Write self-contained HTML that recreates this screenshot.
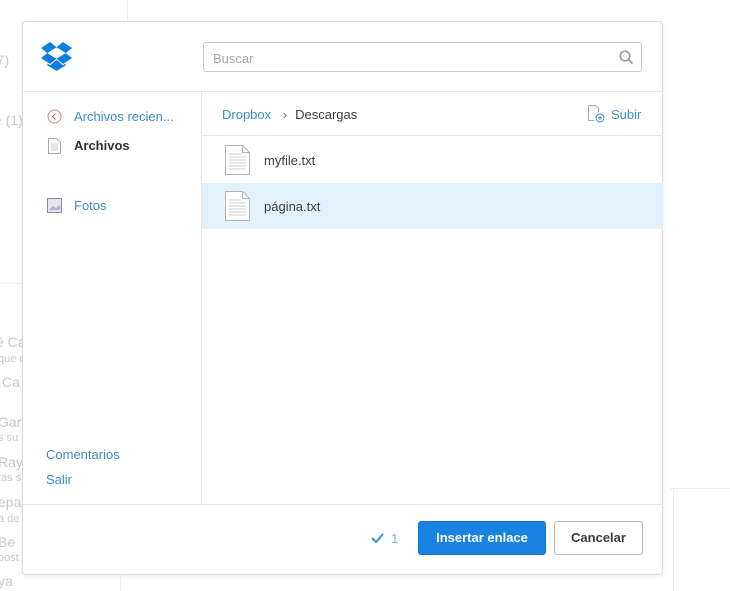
<!DOCTYPE html>
<html><head><meta charset="utf-8"><style>
*{box-sizing:border-box;margin:0;padding:0}
body{width:730px;height:591px;background:#fff;font-family:"Liberation Sans",sans-serif;position:relative;overflow:hidden;font-size:13px}
.bg{position:absolute;color:#c8c8c8;font-size:14px}
.modal{position:absolute;left:22px;top:21px;width:641px;height:554px;background:#fff;border:1px solid #dcdcdc;border-radius:4px;box-shadow:0 1px 4px rgba(0,0,0,.08)}
.hdr{position:absolute;left:0;top:0;width:100%;height:70px;border-bottom:1px solid #e6e6e6}
.search{position:absolute;left:180px;top:20px;width:439px;height:30px;border:1px solid #ccc;border-radius:3px;color:#a6a6a6;padding:8px 9px;font-size:13px}
.side{position:absolute;left:0;top:70px;width:179px;height:412px;border-right:1px solid #e6e6e6}
.si{position:absolute;left:51px;font-size:13px;color:#3d8fc6}
.main{position:absolute;left:179px;top:70px;width:461px;height:412px}
.crumb{height:44px;border-bottom:1px solid #e6e6e6;padding:15px 20px;color:#3d8fc6;font-size:13px;position:relative}
.row{height:46px;position:relative;color:#3c3c3c;font-size:13px}
.row.sel{background:#e3f1fc}
.row span{position:absolute;left:62px;top:16px}
.row svg{position:absolute;left:23px;top:8px}
.ftr{position:absolute;left:0;top:482px;width:100%;height:71px;border-top:1px solid #e6e6e6}
.btn1{position:absolute;left:395px;top:16px;width:128px;height:34px;background:#1a82e0;border:1px solid #1575cc;border-radius:3px;color:#fff;font-weight:bold;text-align:center;line-height:32px;font-size:13px}
.btn2{position:absolute;left:531px;top:16px;width:89px;height:34px;background:#fff;border:1px solid #bbb;border-radius:3px;color:#3c3c3c;font-weight:bold;text-align:center;line-height:32px;font-size:13px}
</style></head><body>
<div class="bg" style="left:-8px;top:52px">(7)</div>
<div class="bg" style="left:-6px;top:112px">e (1)</div>
<div class="bg" style="left:-4px;top:334px">ê Ca</div>
<div class="bg" style="left:-2px;top:353px;font-size:11px">que d</div>
<div class="bg" style="left:2px;top:374px">Ca</div>
<div class="bg" style="left:-2px;top:414px">Gar</div>
<div class="bg" style="left:-2px;top:432px;font-size:11px">s su</div>
<div class="bg" style="left:-2px;top:454px">Ray</div>
<div class="bg" style="left:-2px;top:472px;font-size:11px">tas s</div>
<div class="bg" style="left:-2px;top:494px">epal</div>
<div class="bg" style="left:-2px;top:513px;font-size:11px">a de</div>
<div class="bg" style="left:-2px;top:534px">Be</div>
<div class="bg" style="left:-2px;top:552px;font-size:11px">post</div>
<div class="bg" style="left:-2px;top:573px">ya</div>
<div style="position:absolute;left:120px;top:575px;width:1px;height:16px;background:#eee"></div>
<div style="position:absolute;left:127px;top:0;width:1px;height:21px;background:#eee"></div>
<div style="position:absolute;left:0;top:283px;width:22px;height:1px;background:#eee"></div>
<div style="position:absolute;left:670px;top:488px;width:60px;height:1px;background:#eee"></div>
<div style="position:absolute;left:673px;top:488px;width:1px;height:103px;background:#eee"></div>
<div class="modal">
 <div class="hdr">
  <svg style="position:absolute;left:18px;top:20px" width="31" height="29" viewBox="0 0 42.4 39.6"><path fill="#0d7fe0" d="M12.5 0L0 8.1l8.7 7L21.2 7.2zM0 22l12.5 8.1 8.7-7.3-12.5-7.7zm21.2.8l8.8 7.3 12.4-8.1-8.6-6.9zm21.2-14.7L29.9 0l-8.7 7.2 12.5 7.8zM21.3 24.4l-8.8 7.3-3.7-2.5v2.8l12.5 7.5 12.5-7.5v-2.8l-3.8 2.5z"/></svg>
  <div class="search">Buscar
   <svg style="position:absolute;right:7px;top:7px" width="15" height="15" viewBox="0 0 15 15"><circle cx="6" cy="6" r="4.8" fill="none" stroke="#999" stroke-width="1.6"/><path d="M9.5 9.5l4 4" stroke="#999" stroke-width="1.8"/></svg></div>
 </div>
 <div class="side">
  <svg style="position:absolute;left:24px;top:17px" width="15" height="15"><circle cx="7.5" cy="7.5" r="6.5" fill="none" stroke="#c98c8c" stroke-width="1"/><path d="M8.5 4.5L5.5 7.5l3 3" fill="none" stroke="#c05a5a" stroke-width="1"/></svg>
  <div class="si" style="top:17px">Archivos recien...</div>
  <svg style="position:absolute;left:25px;top:46px" width="13" height="16"><path d="M.5.5h8l4 4v11H.5z" fill="#fff" stroke="#aaa"/><path d="M3 6h7M3 8h7M3 10h7M3 12h7" stroke="#ccc"/></svg>
  <div class="si" style="top:46px;color:#333;font-weight:bold">Archivos</div>
  <svg style="position:absolute;left:24px;top:106px" width="15" height="15"><rect x=".5" y=".5" width="14" height="14" fill="#e7e3f2" stroke="#8a86a8"/><path d="M2 12l4-4 3 2 4-3v5z" fill="#b5b0d0"/></svg>
  <div class="si" style="top:106px">Fotos</div>
  <div class="si" style="top:355px;left:23px">Comentarios</div>
  <div class="si" style="top:380px;left:23px">Salir</div>
 </div>
 <div class="main">
  <div class="crumb">Dropbox <span style="color:#666;margin:0 8px">›</span><span style="color:#3c3c3c">Descargas</span>
   <svg style="position:absolute;left:386px;top:13px" width="18" height="18"><path d="M.5.5h7l3 3v4" fill="none" stroke="#aaa"/><path d="M.5.5v15h6" fill="none" stroke="#aaa"/><circle cx="12" cy="13" r="4" fill="#fff" stroke="#3d8fc6"/><path d="M12 11v4M10 13h4" stroke="#3d8fc6"/></svg>
   <span style="position:absolute;left:409px;top:15px">Subir</span></div>
  <div class="row" style="margin-top:1px"><svg width="25" height="30"><path d="M.5.5h17l7 7v22H.5z" fill="#fff" stroke="#b5b5b5"/><path d="M17.5.5v7h7" fill="none" stroke="#b5b5b5"/><path d="M4 9h12M4 12h17M4 15h17M4 18h17M4 21h17M4 24h17" stroke="#ccc"/></svg><span>myfile.txt</span></div>
  <div class="row sel"><svg width="25" height="30"><path d="M.5.5h17l7 7v22H.5z" fill="#fff" stroke="#b5b5b5"/><path d="M17.5.5v7h7" fill="none" stroke="#b5b5b5"/><path d="M4 9h12M4 12h17M4 15h17M4 18h17M4 21h17M4 24h17" stroke="#ccc"/></svg><span>página.txt</span></div>
 </div>
 <div class="ftr">
  <svg style="position:absolute;left:348px;top:28px" width="13" height="10"><path d="M1 5l4 4 7-8" fill="none" stroke="#3d8fc6" stroke-width="2"/></svg>
  <span style="position:absolute;left:368px;top:26px;color:#7aaed6">1</span>
  <div class="btn1">Insertar enlace</div>
  <div class="btn2">Cancelar</div>
 </div>
</div>
</body></html>
